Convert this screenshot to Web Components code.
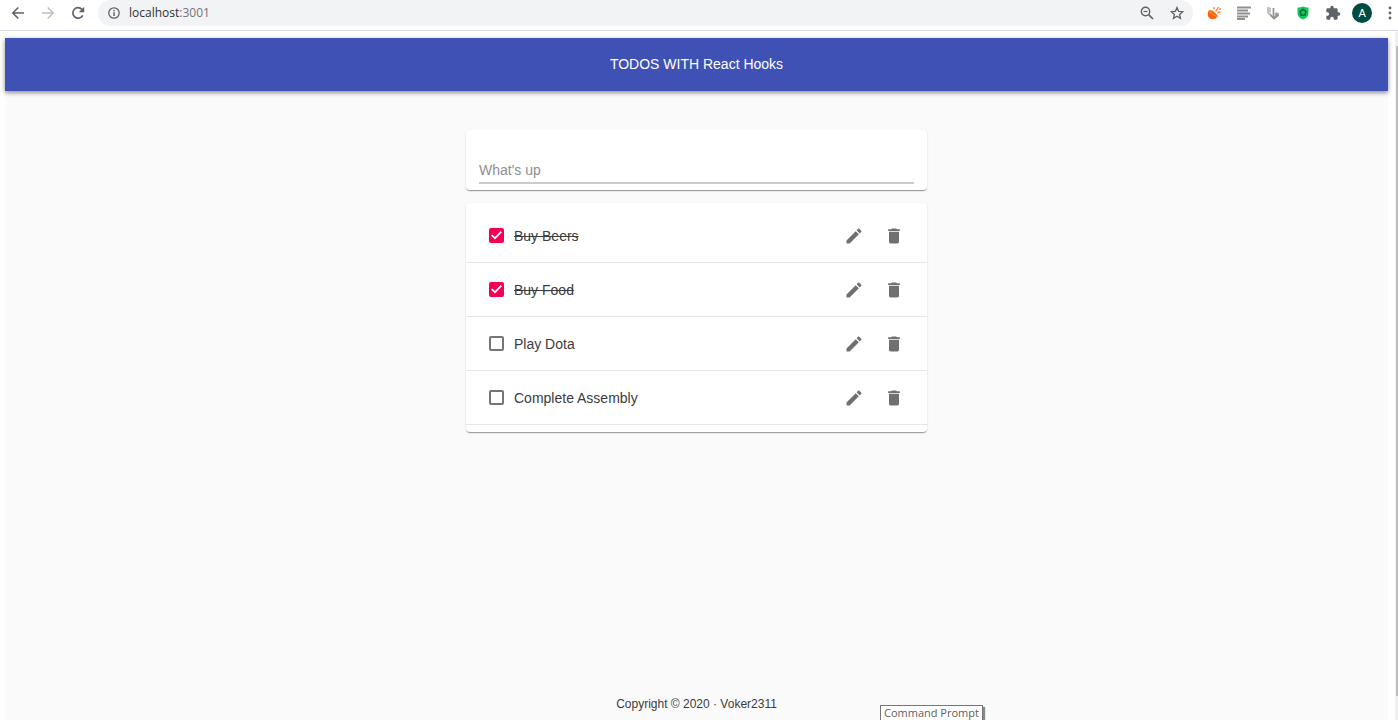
<!DOCTYPE html>
<html lang="en">
<head>
<meta charset="utf-8">
<title>Todos</title>
<style>
html, body { margin: 0; height: 100%; }
body { overflow: hidden; font-family: "Liberation Sans", Arial, sans-serif; font-size: 14px; color: #3c3c3c; background: #fff; }
</style>
</head>
<body>
<app-window></app-window>
<script>
const define = (name, html, setup) => {
  const template = document.createElement('template');
  template.innerHTML = html;
  customElements.define(name, class extends HTMLElement {
    constructor() {
      super();
      this.attachShadow({ mode: 'open' }).append(template.content.cloneNode(true));
    }
    connectedCallback() { if (setup) setup(this, this.shadowRoot); }
  });
};

define('browser-bar', `
<style>
:host { display: flex; align-items: flex-start; height: 30px; border-bottom: 1px solid #d9dbe2; background: #fff; color: #5f6368; font-family: "Open Sans", "Noto Sans", sans-serif; }
button { display: grid; place-items: center; width: 30px; height: 26px; padding: 0; border: 0; background: none; color: inherit; }
svg { display: block; }
nav { display: flex; padding: 0 5px 0 3px; }
.forward { color: #bcbec1; }
.address { flex: 1; display: flex; align-items: center; height: 26px; padding: 0 1px 0 10px; border-radius: 13px; background: #f1f3f4; }
.url { flex: 1; margin-left: 9px; font-size: 12px; line-height: 26px; color: #70757a; }
.url b { font-weight: 400; color: #303134; }
.tools { display: flex; justify-content: space-between; width: 194px; padding-left: 11px; }
.tools button { width: 20px; }
.tools .menu { width: 16px; }
.avatar { display: grid; place-items: center; width: 20px; height: 20px; border-radius: 50%; background: #004d40; color: #fff; font-size: 11px; line-height: 20px; }
</style>
<nav aria-label="History">
<button aria-label="Back"><svg width="14" height="14" viewBox="0 0 14 14" fill="none" stroke="currentColor" stroke-width="1.6"><path d="M13 7H2M7.3 1.5 1.8 7l5.5 5.5"/></svg></button>
<button class="forward" aria-label="Forward"><svg width="14" height="14" viewBox="0 0 14 14" fill="none" stroke="currentColor" stroke-width="1.5"><path d="M1 7h11M6.7 1.5 12.2 7l-5.5 5.5"/></svg></button>
<button aria-label="Reload"><svg width="14" height="14" viewBox="0 0 14 14"><path d="M11.7 9.3A5.2 5.2 0 1 1 11 3.5" fill="none" stroke="currentColor" stroke-width="1.7"/><path d="M13.2.8v5.4H7.8z" fill="currentColor"/></svg></button>
</nav>
<div class="address">
<svg width="12" height="12" viewBox="0 0 12 12"><circle cx="6" cy="6" r="5.2" fill="none" stroke="currentColor" stroke-width="1.3"/><path d="M5.3 5.2h1.5V9H5.3zM5.3 2.9h1.5v1.4H5.3z" fill="currentColor"/></svg>
<div class="url"><b>localhost</b>:3001</div>
<button aria-label="Zoom"><svg width="14" height="14" viewBox="0 0 14 14" fill="none" stroke="currentColor"><circle cx="5.5" cy="5.5" r="4.2" stroke-width="1.4"/><path d="M3.5 5.5h4" stroke-width="1.2"/><path d="m8.6 8.6 4.4 4.4" stroke-width="1.7"/></svg></button>
<button aria-label="Bookmark"><svg width="14" height="14" viewBox="0 0 14 14" fill="none" stroke="currentColor" stroke-width="1.3"><path d="m7 1.5 1.6 3.8 4.1.4-3.1 2.7.9 4L7 10.3l-3.5 2.1.9-4-3.1-2.7 4.1-.4z"/></svg></button>
</div>
<div class="tools">
<button aria-label="Hunter"><svg width="16" height="16" viewBox="0 0 16 16"><path d="M2.800 5.200C1.400 7.500 1.200 10.800 3.100 12.800c2.400 2.300 6.800 1.600 9-1.200z" fill="#ff6200"/><path d="M2.800 5.200C5.300 4 10.500 8 12.100 11.600c-1.600 1-9-4.400-9.300-6.400z" fill="#ff6200" stroke="#ffc09a" stroke-width=".6"/><path d="m8.200 4.600-.2-2.600M9.800 6.200l2.800-4.200M11.200 8l3.400-1.400M13.200 4.600l1.800-1" fill="none" stroke="#ff7a2a" stroke-width="1.300"/></svg></button>
<button aria-label="Reader"><svg width="16" height="14" viewBox="0 0 16 14"><path d="M1 1.500h14M1 4.500h11M1 7.500h13M1 10.500h11M1 13h8" fill="none" stroke="#909090" stroke-width="1.800"/></svg></button>
<button aria-label="Extension"><svg width="14" height="14" viewBox="0 0 14 14" fill="none"><path d="M2 1v6M4 1.500v5M1.500 6.500l4 3" stroke="#b5b5b5" stroke-width="1.600"/><path d="M7.500 2v9M4.500 9l3.500 3.500 4.500-3.500M10 6.500v4M12 7v3M6 11h4.500" stroke="#929292" stroke-width="1.700"/></svg></button>
<button aria-label="Shield"><svg width="12" height="14" viewBox="0 0 12 14"><path d="M6 .5c1.800.8 3.500 1.100 5.500 1.100v6c0 3-2.400 4.900-5.500 6-3.100-1.100-5.500-3-5.500-6v-6C2.500 1.600 4.200 1.300 6 .5z" fill="#12c75c"/><path d="m6 3.400 3 2.200-1.100 3.600H4.100L3 5.600z" fill="none" stroke="#11633d" stroke-width="1.400"/></svg></button>
<button aria-label="Extensions"><svg width="16" height="16" viewBox="0 0 24 24" fill="currentColor"><path d="M20.500 11H19V7c0-1.100-.9-2-2-2h-4V3.500a2.500 2.500 0 0 0-5 0V5H4c-1.100 0-2 .9-2 2v3.800h1.500a2.700 2.700 0 0 1 0 5.400H2V20c0 1.100.9 2 2 2h3.800v-1.500a2.700 2.700 0 0 1 5.400 0V22H17c1.100 0 2-.9 2-2v-4h1.500a2.500 2.500 0 0 0 0-5z"/></svg></button>
<button aria-label="Account"><span class="avatar">A</span></button>
<button class="menu" aria-label="Menu"><svg width="4" height="14" viewBox="0 0 4 14" fill="currentColor"><circle cx="2" cy="2" r="1.400"/><circle cx="2" cy="7" r="1.400"/><circle cx="2" cy="12" r="1.400"/></svg></button>
</div>`);

define('app-header', `
<style>
:host { display: block; flex: none; position: relative; background: #3f51b5; box-shadow: 0 2px 4px rgba(0,0,0,.32), 0 1px 6px rgba(0,0,0,.16); }
h1 { margin: 0; height: 53px; font-size: 14px; font-weight: 400; line-height: 52px; text-align: center; color: #fff; }
</style>
<h1><slot></slot></h1>`);

define('paper-card', `
<style>
:host { display: block; border-radius: 4px; background: #fff; box-shadow: 0 2px 1px -1px rgba(0,0,0,.24), 0 1px 1px rgba(0,0,0,.16), 0 1px 3px rgba(0,0,0,.08); }
</style>
<slot></slot>`);

define('todo-form', `
<style>
:host { display: block; padding: 27px 13px 6px; }
input { display: block; box-sizing: border-box; width: 100%; height: 27px; padding: 0; border: 0; border-bottom: 2px solid #cbcbcb; border-radius: 0; background: none; font: inherit; color: inherit; outline: 0; }
input::placeholder { color: #8f8f8f; opacity: 1; }
</style>
<input type="text" placeholder="What's up" aria-label="New todo">`);

define('todo-item', `
<style>
:host { display: flex; align-items: center; box-sizing: border-box; height: 54px; padding: 0 13px 0 23px; border-bottom: 1px solid #e6e6e6; }
input { appearance: none; flex: none; display: grid; box-sizing: border-box; width: 15px; height: 15px; margin: 0; border: 2px solid #757575; border-radius: 2px; }
input:checked { border-color: #f50057; background: #f50057; }
input:checked::before { content: ""; width: 11px; height: 11px; background: #fff; clip-path: polygon(0 50%, 12% 40%, 36% 64%, 88% 10%, 100% 21%, 36% 86%); }
label { flex: 1; margin-left: 10px; line-height: 20px; }
input:checked + label { text-decoration: line-through; }
button { display: grid; place-items: center; width: 40px; height: 40px; padding: 0; border: 0; background: none; color: #707070; }
</style>
<input type="checkbox" id="done"><label for="done"><slot></slot></label>
<button aria-label="Edit"><svg width="20" height="20" viewBox="0 0 24 24" fill="currentColor"><path d="M3 17.250V21h3.750L17.810 9.940l-3.750-3.750L3 17.250zM20.710 7.040c.39-.39.39-1.020 0-1.410l-2.340-2.340c-.39-.39-1.020-.39-1.410 0l-1.830 1.830 3.750 3.750 1.830-1.830z"/></svg></button>
<button aria-label="Delete"><svg width="20" height="20" viewBox="0 0 24 24" fill="currentColor"><path d="M6 19c0 1.100.9 2 2 2h8c1.100 0 2-.9 2-2V7H6v12zM19 4h-3.500l-1-1h-5l-1 1H5v2h14V4z"/></svg></button>`,
(host, root) => { root.querySelector('input').checked = host.hasAttribute('done'); });

define('app-footer', `
<style>
:host { display: block; margin-top: auto; padding-bottom: 6px; font-size: 12px; line-height: 20px; text-align: center; }
</style>
<slot></slot>`);

define('task-tooltip', `
<style>
:host { display: block; position: absolute; left: calc(50% + 181px); bottom: 0; padding: 0 3px; border: 1px solid #767676; border-bottom: 0; background: #fff; box-shadow: 2px 2px 1px rgba(0,0,0,.45); font-family: "Open Sans", "Noto Sans", sans-serif; font-size: 11px; line-height: 14px; color: #606060; white-space: nowrap; }
</style>
<slot></slot>`);

define('app-window', `
<style>
:host { display: flex; flex-direction: column; position: relative; height: 100vh; overflow: hidden; }
.viewport { flex: 1; display: flex; min-height: 0; }
.page { flex: 1; display: flex; flex-direction: column; margin: 7px 7px 0 5px; background: #fafafa; }
main { display: grid; gap: 13px; width: 33.333%; margin: 39px auto 0; }
.list { padding: 6px 0 7px; }
.scroll { flex: none; width: 3px; box-sizing: border-box; padding: 15px 0 24px 1px; background: #f1f1f1; }
.thumb { height: 100%; background: #bdbdbd; }
</style>
<browser-bar></browser-bar>
<div class="viewport">
<div class="page">
<app-header>TODOS WITH React Hooks</app-header>
<main>
<paper-card><todo-form></todo-form></paper-card>
<paper-card><div class="list">
<todo-item done>Buy Beers</todo-item>
<todo-item done>Buy Food</todo-item>
<todo-item>Play Dota</todo-item>
<todo-item>Complete Assembly</todo-item>
</div></paper-card>
</main>
<app-footer>Copyright © 2020 · Voker2311</app-footer>
</div>
<div class="scroll"><div class="thumb"></div></div>
</div>
<task-tooltip>Command Prompt</task-tooltip>`);
</script>
</body>
</html>
